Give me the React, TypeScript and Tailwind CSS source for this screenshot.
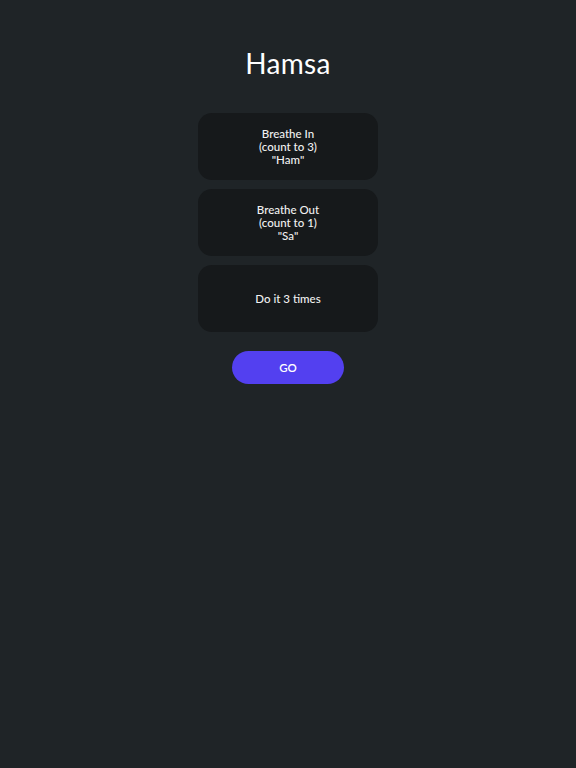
const STEPS = [
  ["Breathe In", "(count to 3)", "\"Ham\""],
  ["Breathe Out", "(count to 1)", "\"Sa\""],
  ["Do it 3 times"],
];

export default function App() {
  return (
    <main
      className="min-h-screen w-full bg-[#1f2427] flex flex-col items-center pt-[44px]"
      style={{ fontFamily: "Lato, 'Noto Sans', sans-serif" }}
    >
      <h1 className="text-[28px] leading-[38px] text-white font-normal tracking-[0.01em]">Hamsa</h1>

      <div className="mt-[31px] flex flex-col gap-[9px]">
        {STEPS.map((lines) => (
          <div
            key={lines[0]}
            className="w-[180px] h-[67px] rounded-[14px] bg-[#16191b] flex flex-col items-center justify-center text-[11.5px] leading-[13px] font-medium text-[#f1f1f1]"
          >
            {lines.map((l) => (
              <span key={l}>{l}</span>
            ))}
          </div>
        ))}
      </div>

      <button className="mt-[19px] w-[112px] h-[33px] rounded-full bg-[#5340f0] text-white text-[11.5px] font-semibold">
        GO
      </button>
    </main>
  );
}
